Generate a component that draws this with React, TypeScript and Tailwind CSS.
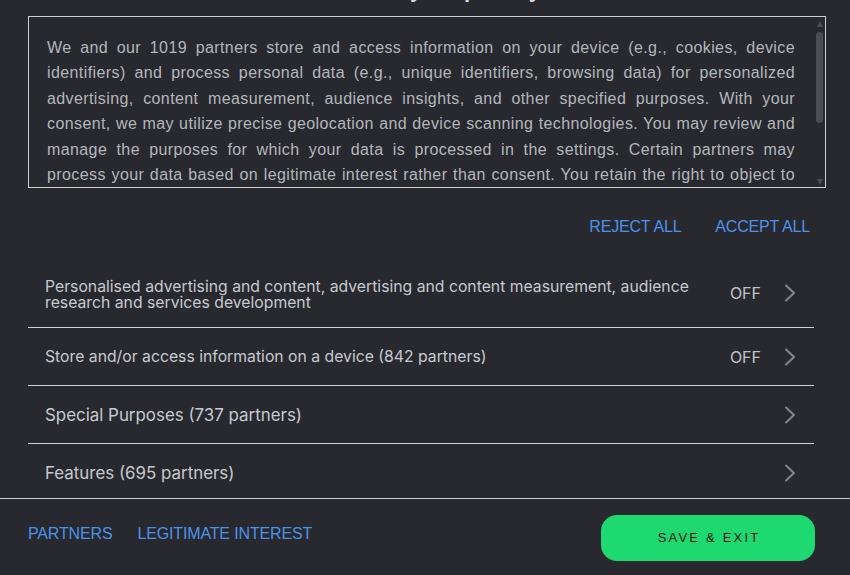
import React from 'react'

const PURPOSES = [
  {
    label:
      'Personalised advertising and content, advertising and content measurement, audience research and services development',
    status: 'OFF',
    tall: true,
  },
  { label: 'Store and/or access information on a device (842 partners)', status: 'OFF' },
  { label: 'Special Purposes (737 partners)', heading: true },
  { label: 'Features (695 partners)', heading: true },
  { label: 'Special Features (2 partners)', status: 'OFF' },
]

function Chevron() {
  return (
    <svg width="12" height="20" viewBox="0 0 12 20" fill="none" className="shrink-0">
      <path d="M2 2.5 L10 10 L2 17.5" stroke="#86878c" strokeWidth="2" strokeLinecap="round" strokeLinejoin="round" />
    </svg>
  )
}

export default function App() {
  return (
    <div className="flex h-[575px] w-[850px] flex-col overflow-hidden bg-[#28292e] font-['Liberation_Sans',Arial,sans-serif]">
      <div className="flex-1 overflow-hidden pl-[28px] pr-[24px]">
        <h2 className="mr-[4px] mt-[-23px] h-[26px] text-center text-[22px] font-bold leading-[26px] text-[#d6d8dc]">
          We value your privacy
        </h2>

        <div className="relative mt-[13px] h-[172px] overflow-hidden border border-[#cfcfcf]">
          <p className="pl-[18px] pr-[30px] pt-[18px] text-justify text-[16px] leading-[25.4px] tracking-[0.4px] text-[#b3b7bd]">
            We and our 1019 partners store and access information on your device (e.g., cookies, device
            identifiers) and process personal data (e.g., unique identifiers, browsing data) for personalized
            advertising, content measurement, audience insights, and other specified purposes. With your
            consent, we may utilize precise geolocation and device scanning technologies. You may review and
            manage the purposes for which your data is processed in the settings. Certain partners may
            process your data based on legitimate interest rather than consent. You retain the right to object to
            this processing at any time. Your choices will be applied to this site only and you can change them at
            any time by returning to the settings.
          </p>
          {/* scrollbar */}
          <div className="absolute right-[2px] top-[4px] h-0 w-0 border-x-[3.5px] border-b-[6px] border-x-transparent border-b-[#4b4c51]" />
          <div className="absolute right-[2px] top-[15px] h-[91px] w-[7px] rounded-full bg-[#4b4c51]" />
          <div className="absolute bottom-[2px] right-[2px] h-0 w-0 border-x-[3.5px] border-t-[6px] border-x-transparent border-t-[#4b4c51]" />
        </div>

        <div className="flex h-[70px] justify-end gap-[34px] pr-[16px] pt-[8px] text-[16px] leading-[18px] tracking-[-0.2px] text-[#4d92ea]">
          <button type="button">REJECT ALL</button>
          <button type="button">ACCEPT ALL</button>
        </div>

        <ul className="mr-[12px] font-['Inter',sans-serif] text-[#c6c9cf]">
          {PURPOSES.map((p) => (
            <li
              key={p.label}
              className={`flex items-center border-b border-[#d2d2d2] pl-[17px] pr-[18px] ${p.tall ? 'h-[70px]' : 'h-[58px]'}`}
            >
              <span
                className={`flex-1 pr-[30px] leading-[16px] ${p.heading ? 'text-[16.9px]' : 'text-[15.75px]'} ${p.tall ? 'mt-[4px]' : ''}`}
              >
                {p.label}
              </span>
              {p.status && (
                <span className="mr-[23px] text-[16px] leading-[18px] text-[#c0c4ca]">{p.status}</span>
              )}
              <Chevron />
            </li>
          ))}
        </ul>
      </div>

      <footer className="flex h-[77px] shrink-0 items-start justify-between border-t border-[#d2d2d2] pl-[28px] pr-[35px] pt-[16px]">
        <div className="mt-[10px] flex gap-[25px] text-[16px] leading-[18px] tracking-[-0.15px] text-[#4d92ea]">
          <button type="button">PARTNERS</button>
          <button type="button">LEGITIMATE INTEREST</button>
        </div>
        <button
          type="button"
          className="h-[46px] w-[214px] rounded-[16px] bg-[#1ed870] pl-[2px] text-[13px] tracking-[2.2px] text-[#141414]"
        >
          SAVE &amp; EXIT
        </button>
      </footer>
    </div>
  )
}
